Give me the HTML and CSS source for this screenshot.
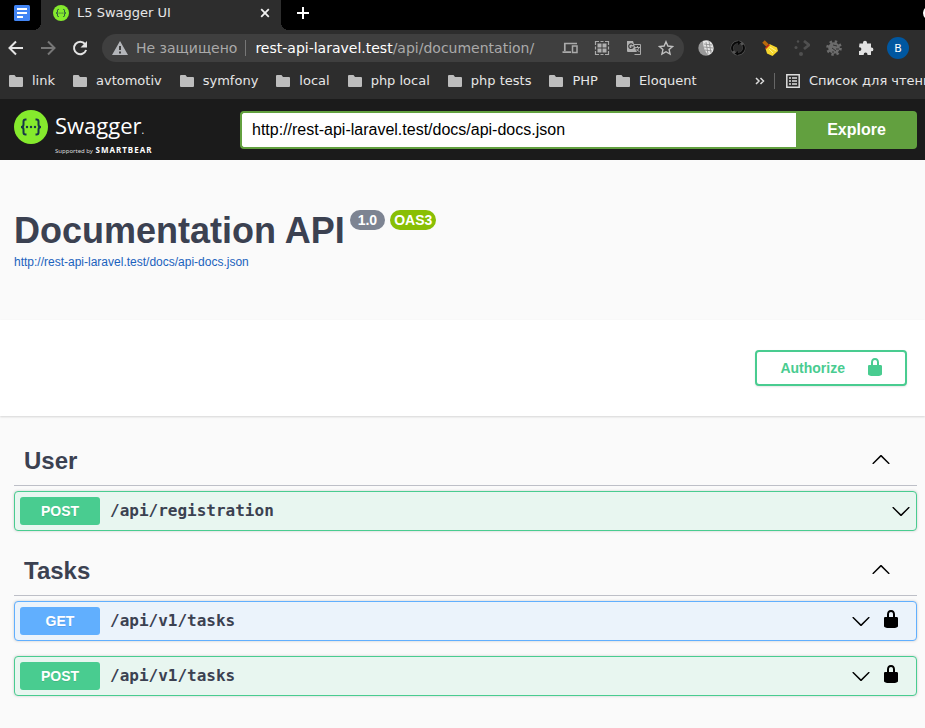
FILE: index.html
```html
<!DOCTYPE html>
<html lang="ru">
<head>
<meta charset="utf-8">
<title>L5 Swagger UI</title>
<link rel="stylesheet" href="styles.css">
</head>
<body>
<svg class="defs" aria-hidden="true">
  <symbol id="folder" viewBox="0 0 14 12"><path d="M1 0h4.500l1.500 2H13a1 1 0 0 1 1 1v8a1 1 0 0 1-1 1H1a1 1 0 0 1-1-1V1a1 1 0 0 1 1-1z"/></symbol>
  <symbol id="lock" viewBox="0 0 20 20"><path d="M15.800 8H14V5.600C14 2.703 12.665 1 10 1 7.334 1 6 2.703 6 5.600V8H4c-.553 0-1 .646-1 1.199V17c0 .549.428 1.139.951 1.307l1.197.387C5.672 18.861 6.550 19 7.100 19h5.800c.549 0 1.428-.139 1.951-.307l1.196-.387c.524-.167.953-.757.953-1.306V9.199C17 8.646 16.352 8 15.800 8zM12 8H8V5.199C8 3.754 8.797 3 10 3c1.203 0 2 .754 2 2.199V8z"/></symbol>
  <symbol id="down" viewBox="0 0 20 20"><path d="M17.418 6.109c.272-.268.709-.268.979 0s.271.701 0 .969l-7.908 7.830c-.27.268-.707.268-.979 0l-7.908-7.830c-.27-.268-.27-.701 0-.969.271-.268.709-.268.979 0L10 13.250l7.418-7.141z"/></symbol>
  <symbol id="up" viewBox="0 0 20 20"><path d="M17.418 14.908c.272.268.709.268.979 0s.271-.701 0-.969l-7.908-7.830c-.27-.268-.707-.268-.979 0l-7.908 7.830c-.27.268-.27.701 0 .969.271.268.709.268.979 0L10 7.767l7.418 7.141z"/></symbol>
  <symbol id="swagger" viewBox="0 0 34 34"><circle cx="17" cy="17" r="17" fill="#85ea2d"/><g fill="none" stroke="#173647" stroke-width="2"><path d="M12.500 9.500h-1q-2 0-2 2v3q0 2.500-2.500 2.500 2.500 0 2.500 2.500v3q0 2 2 2h1M21.500 9.500h1q2 0 2 2v3q0 2.500 2.500 2.500-2.500 0-2.500 2.500v3q0 2-2 2h-1"/></g><g fill="#173647"><circle cx="13" cy="17" r="1.200"/><circle cx="17" cy="17" r="1.200"/><circle cx="21" cy="17" r="1.200"/></g></symbol>
</svg>

<header class="browser">
  <div class="tabs">
    <div class="pinned"><svg width="16" height="16" viewBox="0 0 16 16"><rect width="16" height="16" rx="1.500" fill="#4285f4"/><path d="M3 4h10M3 8h10M3 12h6" stroke="#fff" stroke-width="2"/></svg></div>
    <div class="tab">
      <svg width="16" height="16" aria-hidden="true"><use href="#swagger"/></svg>
      <span class="tab-title">L5 Swagger UI</span>
      <button class="icon-btn" aria-label="Закрыть"><svg width="10" height="10" viewBox="0 0 10 10"><path d="M1.200 1.200l7.600 7.600M8.800 1.200L1.200 8.800" stroke="#f1f1f1" stroke-width="1.800"/></svg></button>
    </div>
    <button class="icon-btn new-tab" aria-label="Новая вкладка"><svg width="12" height="12" viewBox="0 0 12 12"><path d="M6 0v12M0 6h12" stroke="#fff" stroke-width="2"/></svg></button>
    <span class="window-dot"></span>
  </div>

  <div class="toolbar">
    <button class="icon-btn" aria-label="Назад"><svg width="16" height="16" viewBox="0 0 16 16" fill="none" stroke="#e4e4e4" stroke-width="2"><path d="M15 8H2M8 1.500L1.500 8 8 14.500"/></svg></button>
    <button class="icon-btn" aria-label="Вперёд"><svg width="16" height="16" viewBox="0 0 16 16" fill="none" stroke="#777" stroke-width="2"><path d="M1 8h13M8 1.500L14.500 8 8 14.500"/></svg></button>
    <button class="icon-btn" aria-label="Обновить"><svg width="16" height="16" viewBox="0 0 16 16"><path d="M13 4A6.200 6.200 0 1 0 14.100 10" fill="none" stroke="#e4e4e4" stroke-width="2"/><path d="M15 1v6.500H8.500z" fill="#e4e4e4"/></svg></button>
    <div class="address">
      <svg width="16" height="14" viewBox="0 0 16 14"><path fill="#b4b6ba" fill-rule="evenodd" d="M8 0l8 14H0zM7 5h2v4H7zm0 5.500h2v2H7z"/></svg>
      <span class="insecure">Не защищено</span>
      <span class="url"><b>rest-api-laravel.test</b>/api/documentation/</span>
      <div class="icons">
        <svg width="16" height="16" viewBox="0 0 16 16" fill="none" stroke="#aaa"><path d="M15 3.500H2.800V11M.500 12.200H9" stroke-width="1.700"/><rect x="10.500" y="6" width="4.500" height="6.500" stroke-width="1.500"/></svg>
        <svg width="16" height="16" viewBox="0 0 16 16" fill="#b0b0b0"><path d="M1.500 5V1.500H5M6.500 1.500h3M11 1.500h3.500V5M14.500 6.500v3M14.500 11v3.500H11M9.500 14.500h-3M5 14.500H1.500V11M1.500 9.500v-3" fill="none" stroke="#aaa" stroke-width="1.200"/><rect x="3.500" y="3.500" width="4" height="4"/><rect x="8.500" y="3.500" width="4" height="4"/><rect x="3.500" y="8.500" width="4" height="4"/><rect x="8.500" y="8.500" width="4" height="4"/></svg>
        <svg width="16" height="16" viewBox="0 0 16 16"><path d="M7 4.500h7.500v10H8.500" fill="none" stroke="#aaa"/><path d="M1 1h6l3.500 11H2a1 1 0 0 1-1-1z" fill="#b0b0b0"/><path d="M7 5A2.300 2.300 0 1 0 7.200 7H5" fill="none" stroke="#3d3d3d" stroke-width="1.200"/><path d="M9 7.500h5M11.500 6v1.500M13 7.500q-.500 2.500-3 4M10.500 9l3 3" fill="none" stroke="#aaa"/></svg>
        <svg width="16" height="16" viewBox="0 0 16 16"><path d="M8 1.700l1.900 4.300 4.700.450-3.500 3.100 1 4.600L8 11.700l-4.100 2.450 1-4.600-3.500-3.100L6.100 6z" fill="none" stroke="#c0c0c0" stroke-width="1.400"/></svg>
      </div>
    </div>
    <div class="icons">
      <svg width="16" height="16" viewBox="0 0 16 16"><circle cx="8" cy="8" r="7.700" fill="#999"/><path d="M5 1Q13-1 15 6t-5 9Q5 9 5 1z" fill="#e5e5e5"/><path d="M6 4l8 1M6 7l9 1M7 10l7 1M8 2l2 12M11 1l2 12" stroke="#888" stroke-width=".800"/></svg>
      <svg width="16" height="16" viewBox="0 0 16 16" fill="none"><circle cx="8" cy="8" r="6" stroke="#555" stroke-width="3"/><path d="M3 11A5.800 5.800 0 0 1 9 2.300M13 5A5.800 5.800 0 0 1 7 13.700" stroke="#080808" stroke-width="2"/><path d="M8 .500l3.500 2L8 5zM8 11l-3.500 2.500L8 15.500z" fill="#080808"/></svg>
      <svg width="16" height="16" viewBox="0 0 16 16"><path d="M1.500 1.500l4 4" stroke="#b96a0c" stroke-width="3.600"/><path d="M7.500 4L15 7.500l1 3.500-5.500 5L5 13.500 3.500 8.500z" fill="#f6d62d"/><path d="M8 7l6 4M7 9l4 4" stroke="#fff38a"/><path d="M3.500 8.500L7.500 4.500" stroke="#c92b17" stroke-width="1.600"/></svg>
      <svg width="16" height="16" viewBox="0 0 16 16" fill="#505050"><circle cx="4" cy="1.500" r="1.200"/><circle cx="2" cy="7.500" r="1.500"/><circle cx="7" cy="14" r="2"/><path d="M10 1l5 4-5 4" fill="none" stroke="#505050" stroke-width="2.800"/></svg>
      <svg width="16" height="16" viewBox="0 0 16 16"><circle cx="8" cy="8" r="6.500" fill="none" stroke="#6c6c6c" stroke-width="2.600" stroke-dasharray="2.400 2.700"/><circle cx="8" cy="8" r="5.800" fill="#6c6c6c"/><path d="M7 5l4 1M6 8l4 3M10 9h3M7 11v2" stroke="#333"/></svg>
      <svg width="16" height="16" viewBox="0 0 16 16"><path fill="#e2e2e2" d="M1.500 3.500H5V2.800a2 2 0 0 1 4 0v.700h4v4h.500a1.900 1.900 0 0 1 0 3.800H13V15H9.500v-.500a1.900 1.900 0 0 0-3.800 0v.500H1v-4h.500a1.900 1.900 0 0 0 0-3.800H1z"/></svg>
    </div>
    <button class="avatar">B</button>
  </div>

  <nav class="bookmarks">
    <a href="#"><svg><use href="#folder"/></svg>link</a>
    <a href="#"><svg><use href="#folder"/></svg>avtomotiv</a>
    <a href="#"><svg><use href="#folder"/></svg>symfony</a>
    <a href="#"><svg><use href="#folder"/></svg>local</a>
    <a href="#"><svg><use href="#folder"/></svg>php local</a>
    <a href="#"><svg><use href="#folder"/></svg>php tests</a>
    <a href="#"><svg><use href="#folder"/></svg>PHP</a>
    <a href="#"><svg><use href="#folder"/></svg>Eloquent</a>
    <div class="reading">
      <button class="icon-btn" aria-label="Ещё закладки"><svg width="10" height="8" viewBox="0 0 10 8"><path d="M1 1l3 3-3 3M5.500 1l3 3-3 3" fill="none" stroke="#ddd" stroke-width="1.500"/></svg></button>
      <a href="#"><svg class="list-icon" viewBox="0 0 14 14"><path d="M.800.800h12.400v12.400H.800zM3 4h2M6 4h5M3 7h2M6 7h5M3 10h2M6 10h5" fill="none" stroke="#ddd" stroke-width="1.500"/></svg>Список для чтения</a>
    </div>
  </nav>
</header>

<div class="topbar">
  <a class="logo" href="#" aria-label="Swagger">
    <svg width="34" height="34"><use href="#swagger"/></svg>
    <span class="brand"><span class="name">Swagger<small>.</small></span><span class="support">Supported by <b>SMARTBEAR</b></span></span>
  </a>
  <form class="spec">
    <input type="text" aria-label="URL" value="http://rest-api-laravel.test/docs/api-docs.json">
    <button type="button">Explore</button>
  </form>
</div>

<main>
  <section class="info">
    <div class="heading"><h1>Documentation API</h1><span class="badge">1.0</span><span class="badge oas">OAS3</span></div>
    <a class="doc-link" href="#">http://rest-api-laravel.test/docs/api-docs.json</a>
  </section>
  <section class="scheme">
    <button class="authorize">Authorize<svg width="20" height="20"><use href="#lock"/></svg></button>
  </section>
  <div class="groups">
    <section>
      <div class="group-head"><h2>User</h2><button class="icon-btn" aria-label="Свернуть User"><svg width="20" height="20"><use href="#up"/></svg></button></div>
      <div class="op post"><span class="method">POST</span><span class="path">/api/registration</span><button class="icon-btn" aria-label="Развернуть"><svg width="20" height="20"><use href="#down"/></svg></button></div>
    </section>
    <section>
      <div class="group-head"><h2>Tasks</h2><button class="icon-btn" aria-label="Свернуть Tasks"><svg width="20" height="20"><use href="#up"/></svg></button></div>
      <div class="op get"><span class="method">GET</span><span class="path">/api/v1/tasks</span><button class="icon-btn" aria-label="Развернуть"><svg width="20" height="20"><use href="#down"/></svg></button><button class="icon-btn lock" aria-label="Авторизация"><svg width="20" height="20"><use href="#lock"/></svg></button></div>
      <div class="op post"><span class="method">POST</span><span class="path">/api/v1/tasks</span><button class="icon-btn" aria-label="Развернуть"><svg width="20" height="20"><use href="#down"/></svg></button><button class="icon-btn lock" aria-label="Авторизация"><svg width="20" height="20"><use href="#lock"/></svg></button></div>
    </section>
  </div>
</main>
</body>
</html>
```

FILE: styles.css
```css
* { box-sizing: border-box; }
body { margin: 0; background: #fafafa; color: #3b4151; font-family: "Liberation Sans", Arial, sans-serif; }
a { text-decoration: none; }
h1, h2 { margin: 0; }
svg { display: block; flex: none; }
.defs { position: absolute; width: 0; height: 0; }
button { font-family: inherit; cursor: pointer; }
.icon-btn { border: 0; padding: 0; background: none; flex: none; }

/* Browser chrome */
.browser { background: #2d2d2d; color: #e6e6e6; font: 13px/16px "DejaVu Sans", sans-serif; border-bottom: 1px solid #1b1b1b; overflow: hidden; }
.tabs { display: flex; align-items: center; height: 30px; padding-bottom: 4px; background: #000; }
.pinned { width: 41px; padding-left: 14px; }
.tab { position: relative; display: flex; align-items: center; gap: 8px; width: 240px; height: 30px; margin-bottom: -4px; padding: 0 11px 4px 12px; background: #2d2d2d; }
.tab::before, .tab::after { content: ""; position: absolute; bottom: 0; width: 8px; height: 8px; }
.tab::before { right: 100%; background: radial-gradient(circle at 0 0, #000 8px, #2d2d2d 8px); }
.tab::after { left: 100%; background: radial-gradient(circle at 100% 0, #000 8px, #2d2d2d 8px); }
.tab-title { flex: 1; }
.new-tab { margin-left: 16px; }
.window-dot { width: 14px; height: 14px; margin: 0 -12px 0 auto; border-radius: 50%; background: #fff; flex: none; }
.toolbar { display: flex; align-items: center; gap: 16px; padding: 4px 16px 4px 8px; }
.address { display: flex; align-items: center; flex: 1; min-width: 0; height: 28px; margin: 0 -2px; padding: 0 10px; border-radius: 14px; background: #3f3f3f; color: #aaa; font-size: 14px; }
.insecure { margin-left: 8px; padding-right: 8px; border-right: 1px solid #777; white-space: nowrap; }
.url { flex: 1; margin-left: 9px; white-space: nowrap; }
.url b { color: #fff; font-weight: 400; }
.icons { display: flex; gap: 16px; }
.avatar { width: 22px; height: 22px; margin: 0 0 0 -3px; padding: 0; border: 0; border-radius: 50%; background: #0057a0; color: #fff; font-size: 11px; }
.bookmarks { display: flex; align-items: center; gap: 18px; height: 33px; padding: 0 0 3px 9px; white-space: nowrap; }
.bookmarks a { display: flex; align-items: center; gap: 9px; color: #e6e6e6; }
.bookmarks svg { fill: #bdbdbd; }
.bookmarks a svg { width: 14px; height: 12px; }
.bookmarks a .list-icon { height: 14px; }
.reading { display: flex; align-items: center; flex: none; width: 170px; margin-left: auto; }
.reading a { margin-left: 9px; padding-left: 11px; border-left: 1px solid #666; }

/* Swagger header */
.topbar { display: flex; align-items: center; padding: 11px 8px 11px 14px; background: #1b1b1b; }
.logo { display: flex; align-items: flex-start; gap: 7px; width: 226px; height: 40px; margin: -1px 0; color: #fff; }
.brand { display: flex; flex-direction: column; font-family: "Open Sans", sans-serif; }
.name { font-size: 22px; line-height: 31px; }
.name small { font-size: 10px; }
.support { font-family: "Noto Sans", sans-serif; font-size: 6px; line-height: 8px; white-space: nowrap; color: #ddd; }
.support b { margin-left: 1px; color: #fff; font-size: 8px; letter-spacing: 1px; }
.spec { display: flex; flex: 1; height: 38px; }
.spec input { flex: 1; min-width: 0; padding: 0 10px; border: 2px solid #62a03f; border-right: 0; border-radius: 4px 0 0 4px; outline: 0; background: #fff; color: #000; font: 16px "Liberation Sans", Arial, sans-serif; }
.spec button { width: 121px; border: 0; border-radius: 0 4px 4px 0; background: #62a03f; color: #fff; font-size: 16px; font-weight: 700; }

/* API information */
.info { height: 160px; padding: 50px 14px 0; }
.heading { display: flex; align-items: flex-start; gap: 5px; }
.info h1 { font-size: 36px; line-height: 42px; }
.badge { padding: 0 8px; border-radius: 10px; background: #7d8492; color: #fff; font-size: 14px; font-weight: 700; line-height: 20px; }
.oas { padding: 0 4px; background: #89bf04; }
.doc-link { display: block; margin-top: 3px; color: #1b62bd; font-size: 12px; line-height: 14px; }
.scheme { display: flex; justify-content: flex-end; padding: 30px 18px; background: #fff; box-shadow: 0 1px 2px rgba(0, 0, 0, .15); }
.authorize { display: flex; align-items: center; gap: 20px; height: 36px; padding: 0 20px 0 23px; border: 2px solid #49cc90; border-radius: 4px; background: #fff; box-shadow: 0 1px 2px rgba(0, 0, 0, .1); color: #49cc90; font-size: 14px; font-weight: 700; }
.authorize svg { margin-bottom: 2px; fill: #49cc90; }

/* Operations */
.groups { padding: 20px 8px 17px 14px; }
.group-head { display: flex; align-items: center; justify-content: space-between; height: 50px; margin-bottom: 5px; padding: 0 26px 0 10px; border-bottom: 1px solid #bdbfc7; }
.group-head h2 { font-size: 24px; line-height: 28px; }
.group-head .icon-btn { padding-bottom: 4px; }
.op { display: flex; align-items: center; gap: 10px; height: 40px; margin-bottom: 15px; padding: 5px; border: 1px solid; border-radius: 4px; box-shadow: 0 0 3px rgba(0, 0, 0, .19); }
.post { border-color: #49cc90; background: #e8f6f0; }
.get { border-color: #61affe; background: #ebf3fb; }
.method { width: 80px; border-radius: 3px; color: #fff; font-size: 14px; font-weight: 700; line-height: 28px; text-align: center; text-shadow: 0 1px 0 rgba(0, 0, 0, .1); }
.post .method { background: #49cc90; }
.get .method { background: #61affe; }
.path { flex: 1; font: 700 16px/20px "DejaVu Sans Mono", monospace; }
.lock { margin-right: 10px; padding-bottom: 4px; }
```
